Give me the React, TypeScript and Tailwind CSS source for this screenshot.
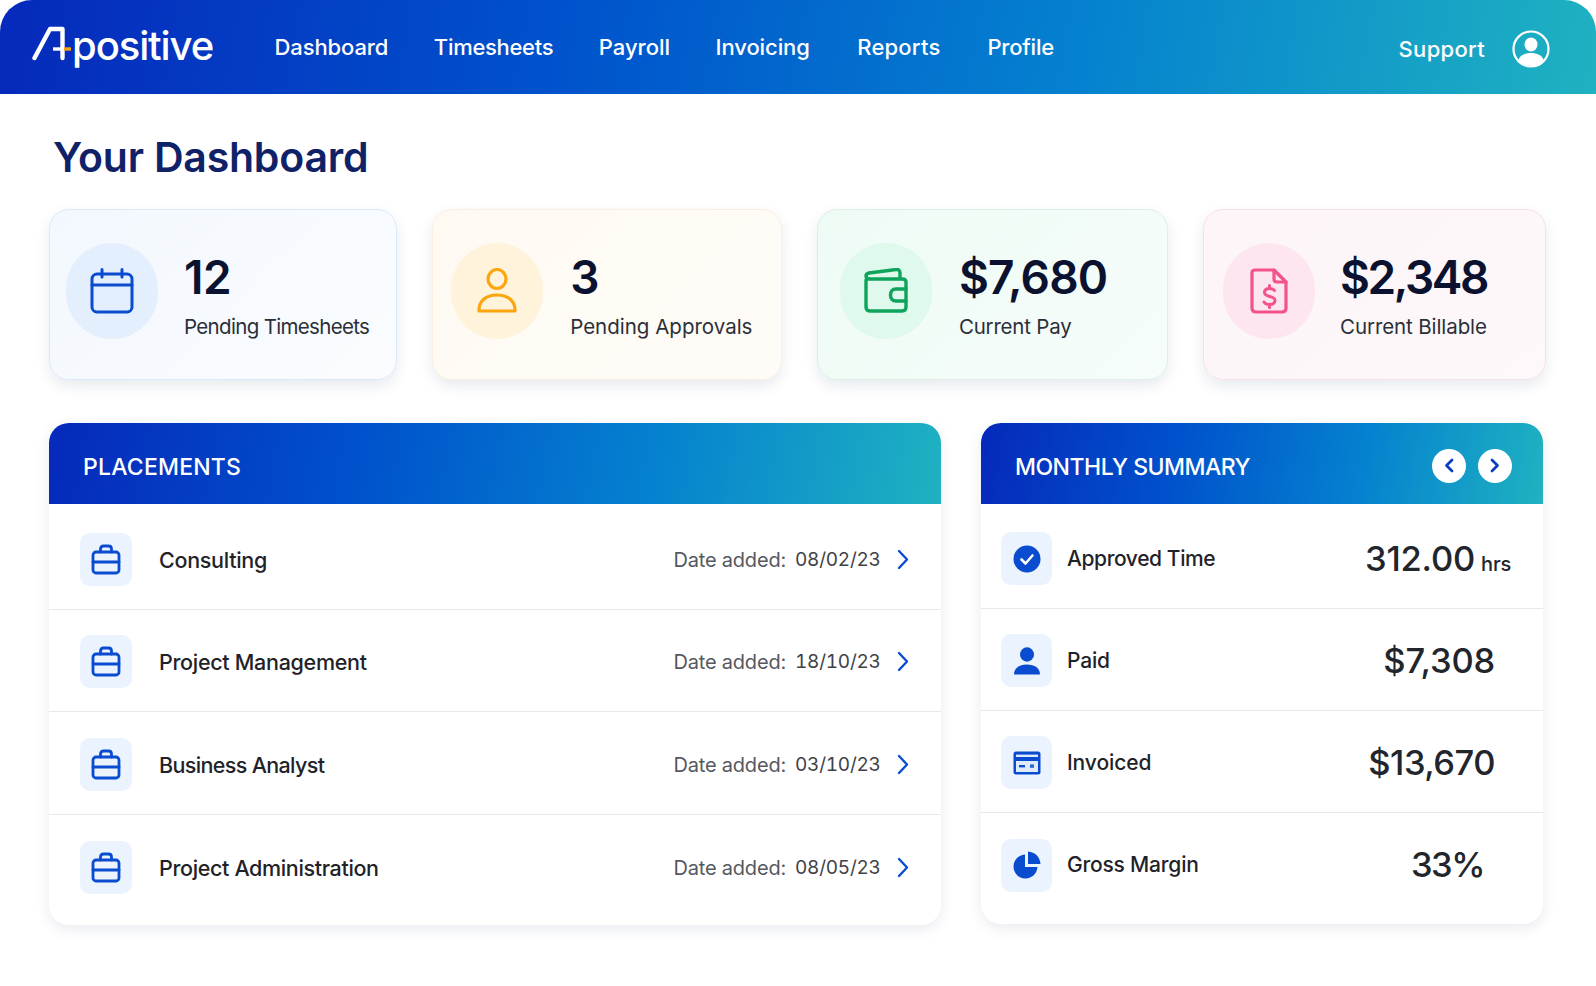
import React from "react";

const grad = "bg-[linear-gradient(100deg,#0629bb_0%,#0052cc_35%,#0582cf_68%,#1fb2c1_100%)]";

function Logo() {
  return (
    <div className="flex items-start h-[50px] w-[242.5px]">
      <svg width="46" height="50" viewBox="0 0 46 50" className="shrink-0 mt-[3px]" fill="none" strokeLinecap="round" strokeLinejoin="round">
        <path d="M2.5 33 L18 4 H30.5 V33" stroke="#fff" strokeWidth="4.4" />
        <path d="M21 24 H32" stroke="#fff" strokeWidth="3.4" strokeLinecap="butt" />
        <path d="M32 24 H39" stroke="#f7a01c" strokeWidth="3.4" strokeLinecap="butt" />
      </svg>
      <span className="text-white font-medium text-[40px] leading-[50px] tracking-[-1.1px] -ml-[6px] -mt-[1px]">positive</span>
    </div>
  );
}

function Calendar() {
  return (
    <svg width="44" height="46" viewBox="0 0 44 46" fill="none" stroke="#0a4cd0" strokeWidth="3" strokeLinecap="round" strokeLinejoin="round">
      <rect x="2" y="6" width="40" height="38" rx="5" />
      <path d="M2 17 H42 M12 1.5 V9 M32 1.5 V9" />
    </svg>
  );
}
function Person() {
  return (
    <svg width="42" height="46" viewBox="0 0 42 46" fill="none" stroke="#fba60f" strokeWidth="3.2" strokeLinecap="round" strokeLinejoin="round">
      <ellipse cx="21" cy="11" rx="9" ry="9.5" />
      <path d="M3 43 H39 C39.5 33 32 27 21 27 C10 27 2.5 33 3 43 Z" />
    </svg>
  );
}
function Wallet() {
  return (
    <svg width="44" height="45" viewBox="0 0 44 45" fill="none" stroke="#0fa35c" strokeWidth="3.4" strokeLinecap="round" strokeLinejoin="round">
      <path d="M2 12 V39 C2 41.5 3.5 43 6 43 H38 C40.5 43 42 41.5 42 39 V14 C42 12 40.5 11 38 11 H6 C3.5 11 2 10 2 8 C2 6.5 3 5.5 5 5 L32 1.5 C34.5 1.2 36 2.5 36 5 V11" />
      <path d="M42 21 H32 C28.5 21 26.5 23.5 26.5 27 C26.5 30.5 28.5 33 32 33 H42" />
    </svg>
  );
}
function FileDollar() {
  return (
    <svg width="38" height="46" viewBox="0 0 38 46" fill="none" stroke="#f3528a" strokeWidth="3.2" strokeLinecap="round" strokeLinejoin="round">
      <path d="M5 2 H24 L36 14 V40 C36 42.5 34.5 44 32 44 H6 C3.5 44 2 42.5 2 40 V5 C2 3 3 2 5 2 Z" />
      <path d="M24 2 V11 C24 13 25 14 27 14 H36" />
      <path d="M24.5 22.5 C23.5 21 22 20.5 19.5 20.5 C16.5 20.5 14.5 22 14.5 24.5 C14.5 30 25 27 25 32.5 C25 35 22.5 36.5 19.5 36.5 C17 36.5 15 35.5 14 34 M19.5 17.5 V20.5 M19.5 36.5 V39.5" strokeWidth="3" />
    </svg>
  );
}
function Briefcase() {
  return (
    <svg width="30" height="31" viewBox="0 0 30 31" fill="none" stroke="#0a4cd0" strokeWidth="2.8" strokeLinecap="round" strokeLinejoin="round">
      <rect x="2" y="8" width="26" height="21" rx="3" />
      <path d="M2 18 H28 M9.5 8 V5 C9.5 3 10.5 2 12.5 2 H17.5 C19.5 2 20.5 3 20.5 5 V8" />
    </svg>
  );
}
function Chevron() {
  return (
    <svg width="12" height="21" viewBox="0 0 12 21" fill="none" stroke="#0a4cd0" strokeWidth="2.4" strokeLinecap="round" strokeLinejoin="round">
      <path d="M2 2 L10 10.5 L2 19" />
    </svg>
  );
}
function CheckFilled() {
  return (
    <svg width="28" height="28" viewBox="0 0 28 28">
      <circle cx="14" cy="14" r="13.5" fill="#0a4cd0" />
      <path d="M8.5 14.5 L12.5 18.5 L19.5 10.5" fill="none" stroke="#fff" strokeWidth="2.6" strokeLinecap="round" strokeLinejoin="round" />
    </svg>
  );
}
function PersonFilled() {
  return (
    <svg width="28" height="28" viewBox="0 0 28 28" fill="#0a4cd0">
      <ellipse cx="14" cy="7.5" rx="7" ry="7.2" />
      <path d="M1 27.5 C1 21 6.5 17.5 14 17.5 C21.5 17.5 27 21 27 27.5 Z" />
    </svg>
  );
}
function CardIcon() {
  return (
    <svg width="28" height="24" viewBox="0 0 28 24">
      <rect x="0.5" y="0.5" width="27" height="23" rx="2.5" fill="#0a4cd0" />
      <rect x="3" y="3.6" width="22" height="2.4" fill="#dfeafc" />
      <rect x="3" y="10" width="22" height="11" fill="#dfeafc" />
      <rect x="6" y="14" width="6" height="2.4" fill="#0a4cd0" />
      <rect x="17" y="13.4" width="4" height="3.4" fill="#2a66d8" />
    </svg>
  );
}
function Pie() {
  return (
    <svg width="28" height="28" viewBox="0 0 28 28" fill="#0a4cd0">
      <path d="M12 3.5 V16 H24.5 C24 22.5 19 27.5 12.5 27.5 C5.5 27.5 0.5 22 0.5 15.5 C0.5 9 5.5 4 12 3.5 Z" />
      <path d="M15 0.5 C22 1 27 6 27.5 13 H15 Z" />
    </svg>
  );
}

const nav = [
  { n: "Dashboard", c: "" },
  { n: "Timesheets", c: "ml-[45.5px] tracking-[-0.3px]" },
  { n: "Payroll", c: "ml-[45.5px] tracking-[0px]" },
  { n: "Invoicing", c: "ml-[45.5px]" },
  { n: "Reports", c: "ml-[47.5px] tracking-[0.2px]" },
  { n: "Profile", c: "ml-[47px] tracking-[-0.2px]" },
];

const stats = [
  { v: "12", vt: "tracking-[-0.5px]", l: "Pending Timesheets", lt: "tracking-[-0.67px]", w: "w-[348px]", card: "border-[#dce9fb] bg-[linear-gradient(135deg,#f3f8fe,#fafcff)]", circ: "bg-[#e3effc]", pl: "pl-[16px]", gap: "gap-[26px]", icon: <Calendar /> },
  { v: "3", vt: "", l: "Pending Approvals", lt: "tracking-[0px]", w: "w-[349.5px]", card: "border-[#f9eee0] bg-[linear-gradient(135deg,#fefaf2,#fffcf8)]", circ: "bg-[#fff3dc]", pl: "pl-[18px]", gap: "gap-[27px]", icon: <Person /> },
  { v: "$7,680", vt: "tracking-[-0.8px]", l: "Current Pay", lt: "tracking-[-0.2px]", w: "w-[351px]", card: "border-[#dcefe8] bg-[linear-gradient(135deg,#eefbf5,#f6fdfa)]", circ: "bg-[#dff9ec]", pl: "pl-[22px]", gap: "gap-[27px]", icon: <Wallet /> },
  { v: "$2,348", vt: "tracking-[-2.4px]", l: "Current Billable", lt: "tracking-[-0.1px]", w: "w-[343px]", card: "border-[#f8e0e8] bg-[linear-gradient(135deg,#fdf5f8,#fdf8fa)]", circ: "bg-[#fde6ef]", pl: "pl-[19px]", gap: "gap-[25px]", icon: <FileDollar /> },
];

const placements = [
  { n: "Consulting", d: "08/02/23", t: "tracking-[-0.3px]" },
  { n: "Project Management", d: "18/10/23", t: "tracking-[-0.3px]" },
  { n: "Business Analyst", d: "03/10/23", t: "tracking-[-0.65px]" },
  { n: "Project Administration", d: "08/05/23", t: "tracking-[-0.35px]" },
];

const summary = [
  { l: "Approved Time", v: "312.00", u: "hrs", pr: "pr-[32px]", vt: "tracking-[-0.2px]", lt: "tracking-[-0.4px]", icon: <CheckFilled /> },
  { l: "Paid", v: "$7,308", u: "", pr: "pr-[48px]", vt: "tracking-[-0.2px]", lt: "tracking-[-0.2px]", icon: <PersonFilled /> },
  { l: "Invoiced", v: "$13,670", u: "", pr: "pr-[48px]", vt: "tracking-[-0.5px]", lt: "tracking-[-0.1px]", icon: <CardIcon /> },
  { l: "Gross Margin", v: "33%", u: "", pr: "pr-[59px]", vt: "tracking-[-1.5px]", lt: "tracking-[-0.2px]", icon: <Pie /> },
];

export default function App() {
  return (
    <div className="w-[1596px] h-[986px] bg-white overflow-hidden font-['Inter','Liberation_Sans',sans-serif]">
      <header className={`h-[94px] rounded-t-[32px] flex items-center pl-[32px] pr-[46px] ${grad}`}>
        <Logo />
        <nav className="flex items-center text-white font-medium text-[22px] tracking-[-0.1px]">
          {nav.map((n) => (
            <span key={n.n} className={n.c}>{n.n}</span>
          ))}
        </nav>
        <div className="ml-auto flex items-center gap-[27px] text-white mt-[3px]">
          <span className="font-medium text-[22px] tracking-[0.3px] mt-[1px]">Support</span>
          <svg width="38" height="38" viewBox="0 0 38 38" fill="none">
            <circle cx="19" cy="19" r="17.5" stroke="#fff" strokeWidth="2.2" />
            <ellipse cx="19" cy="14.5" rx="6.5" ry="7" fill="#fff" />
            <path d="M6.5 30 C8 25 13 23 19 23 C25 23 30 25 31.5 30 C28.5 33.5 24 36 19 36 C14 36 9.5 33.5 6.5 30 Z" fill="#fff" />
          </svg>
        </div>
      </header>

      <main className="pt-[35px] pl-[49px]">
        <h1 className="text-[41px] leading-[56px] font-semibold text-[#0f2167] ml-[4px] mb-[23.5px] tracking-[-0.2px]">Your Dashboard</h1>

        <section className="flex gap-[35.2px]">
          {stats.map((s) => (
            <div key={s.l} className={`${s.w} h-[171px] rounded-[20px] border ${s.card} shadow-[0_6px_14px_rgba(30,50,90,0.10)] flex items-start pt-[33px] ${s.pl} ${s.gap}`}>
              <div className={`w-[92px] h-[96px] rounded-full shrink-0 flex items-center justify-center ${s.circ}`}>{s.icon}</div>
              <div className="mt-[10px]">
                <div className={`text-[46px] leading-[48px] font-semibold text-[#0b1230] ${s.vt}`}>{s.v}</div>
                <div className={`text-[20.5px] leading-[30px] mt-[11px] text-[#2b2f38] whitespace-nowrap ${s.lt}`}>{s.l}</div>
              </div>
            </div>
          ))}
        </section>

        <section className="flex gap-[40px] mt-[43.5px]">
          <div className="w-[892px] h-[502px] rounded-[20px] bg-white shadow-[0_4px_14px_rgba(30,50,90,0.10)] flex flex-col">
            <div className={`h-[81px] pt-[4px] rounded-t-[20px] flex items-center pl-[34px] ${grad}`}>
              <span className="text-white font-medium text-[23px] tracking-[0.2px] mt-[4px]">PLACEMENTS</span>
            </div>
            <div className="pt-[3px] flex flex-col">
              {placements.map((p, i) => (
                <div key={p.n} className={`h-[102.5px] pt-[3px] pl-[31px] flex items-center ${i < 3 ? "border-b border-[#e8e9ec]" : ""}`}>
                  <div className="w-[52px] h-[53px] rounded-[10px] bg-[#eaf3fe] flex items-center justify-center shrink-0"><Briefcase /></div>
                  <span className={`ml-[27px] mt-[1px] text-[21.5px] font-medium text-[#1f2329] ${p.t}`}>{p.n}</span>
                  <span className="ml-auto mt-[1px] text-[20px] text-[#55585e] tracking-[-0.2px] whitespace-nowrap">Date added:</span>
                  <span className="ml-[9px] mt-[1px] w-[85px] text-right text-[19px] tabular-nums text-[#3f4247] tracking-[-0.25px] whitespace-nowrap">{p.d}</span>
                  <span className="ml-[17px] mr-[32px] flex"><Chevron /></span>
                </div>
              ))}
            </div>
          </div>

          <div className="w-[562px] h-[501px] rounded-[20px] bg-white shadow-[0_4px_14px_rgba(30,50,90,0.10)] flex flex-col">
            <div className={`h-[81px] pt-[4px] rounded-t-[20px] flex items-center pl-[34px] pr-[31px] ${grad}`}>
              <span className="text-white font-medium text-[23px] tracking-[-0.5px] mt-[4px]">MONTHLY SUMMARY</span>
              <div className="ml-auto flex gap-[12px]">
                <span className="w-[34px] h-[34px] rounded-full bg-white flex items-center justify-center">
                  <svg width="10" height="15" viewBox="0 0 10 15" fill="none" stroke="#0a3fc4" strokeWidth="2.8" strokeLinecap="round" strokeLinejoin="round"><path d="M8 2 L2.5 7.5 L8 13" /></svg>
                </span>
                <span className="w-[34px] h-[34px] rounded-full bg-white flex items-center justify-center">
                  <svg width="10" height="15" viewBox="0 0 10 15" fill="none" stroke="#0a3fc4" strokeWidth="2.8" strokeLinecap="round" strokeLinejoin="round"><path d="M2 2 L7.5 7.5 L2 13" /></svg>
                </span>
              </div>
            </div>
            <div className="pt-[2.5px] flex flex-col">
              {summary.map((s, i) => (
                <div key={s.l} className={`h-[102px] pt-[3px] pl-[20px] flex items-center ${s.pr} ${i < 3 ? "border-b border-[#e8e9ec]" : ""}`}>
                  <div className="w-[51px] h-[53px] rounded-[10px] bg-[#eaf3fe] flex items-center justify-center shrink-0">{s.icon}</div>
                  <span className={`ml-[15px] text-[21px] font-medium text-[#1f2329] ${s.lt}`}>{s.l}</span>
                  <span className={`ml-auto text-[34.5px] font-medium text-[#22252b] whitespace-nowrap ${s.vt}`}>
                    {s.v}
                    {s.u && <span className="ml-[6px] text-[20px] tracking-[-0.2px]">{s.u}</span>}
                  </span>
                </div>
              ))}
            </div>
          </div>
        </section>
      </main>
    </div>
  );
}
